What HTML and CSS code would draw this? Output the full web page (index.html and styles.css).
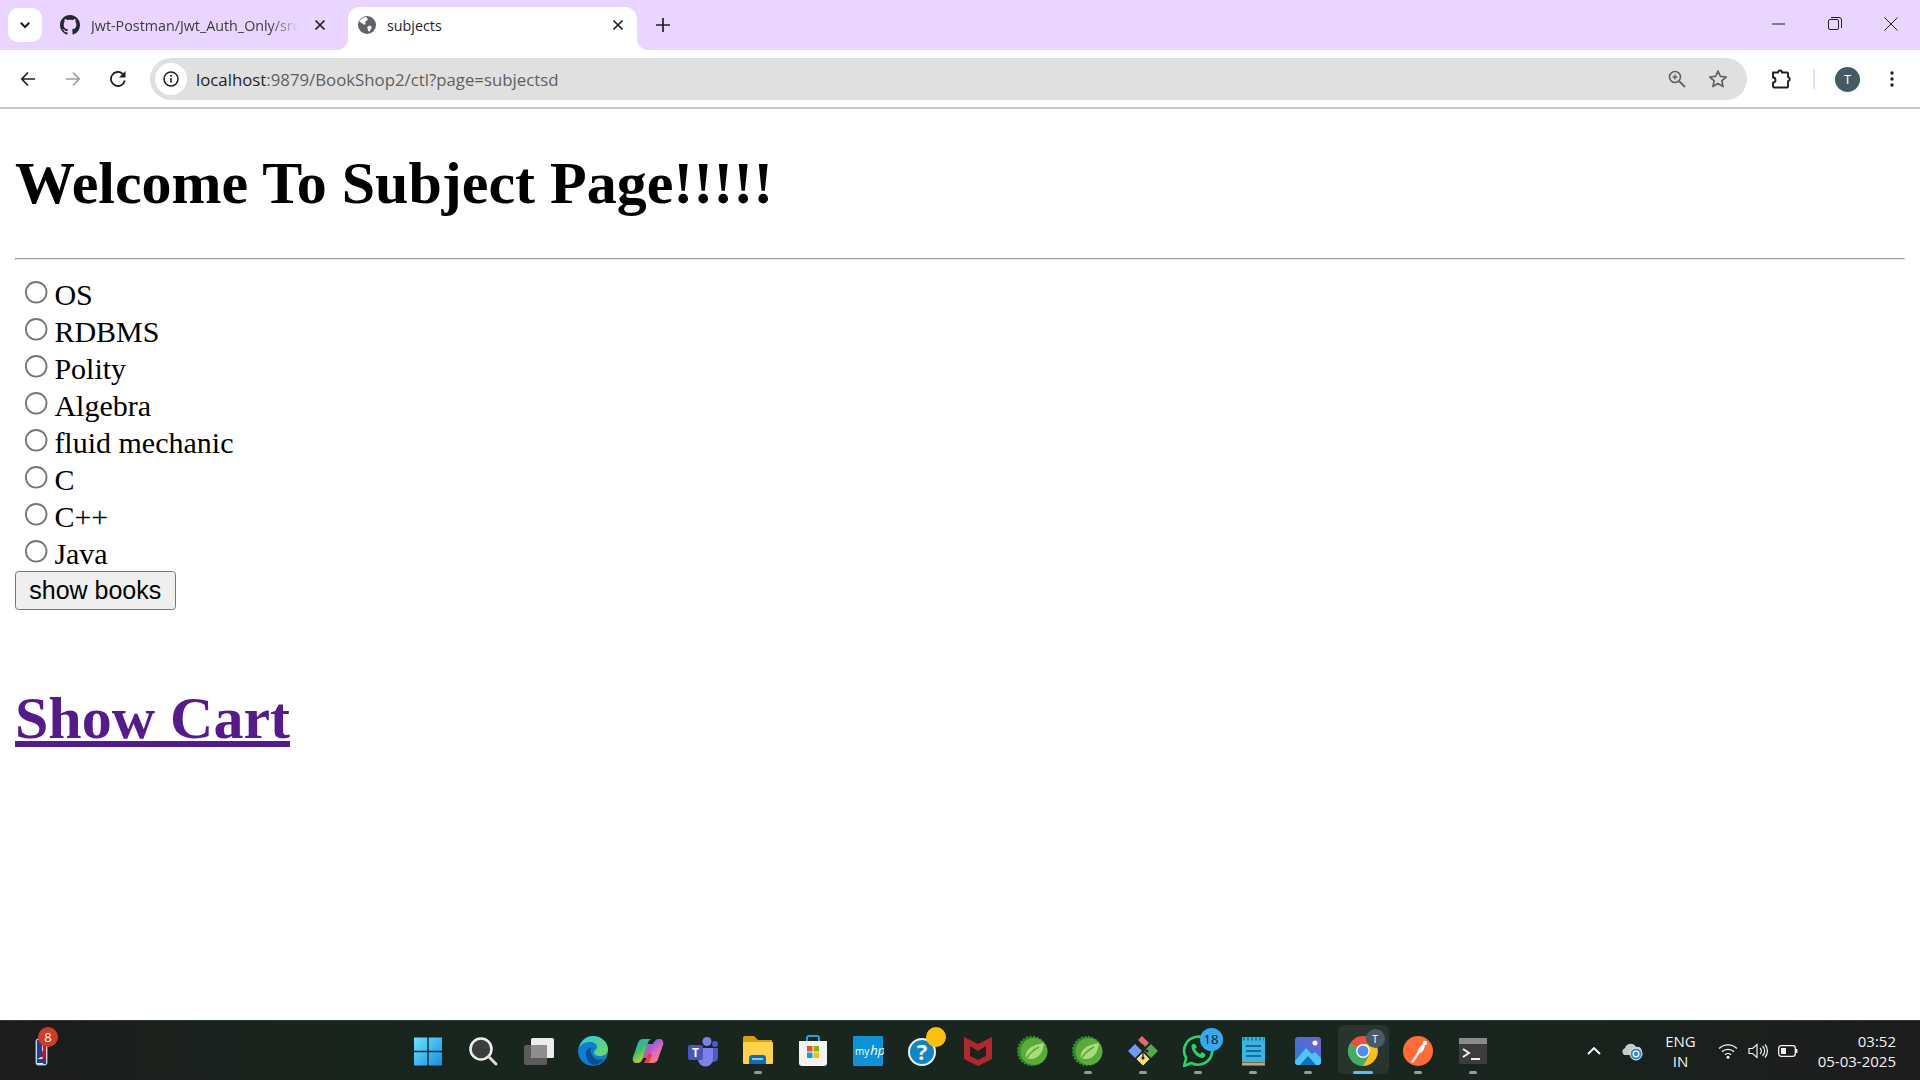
FILE: index.html
```html
<!DOCTYPE html>
<html lang="en">
<head>
  <meta charset="UTF-8" />
  <title>subjects</title>
  <link rel="stylesheet" href="styles.css">
</head>
<body>
  <div class="window">
    <div class="tabstrip">
      <button class="tab-search" type="button" aria-label="Search tabs">
        <svg viewBox="0 0 16 16" width="16" height="16"><path d="M3.800 5.800 8 10l4.200-4.200" fill="none" stroke="#1f1f1f" stroke-width="2"/></svg>
      </button>
      <div class="tab">
        <svg class="favicon" viewBox="0 0 16 16" width="20" height="20"><path fill="#24292f" d="M8 0C3.58 0 0 3.58 0 8c0 3.54 2.29 6.53 5.47 7.59.4.07.55-.17.55-.38 0-.19-.01-.82-.01-1.49-2.01.37-2.53-.49-2.69-.94-.09-.23-.48-.94-.82-1.13-.28-.15-.68-.52-.01-.53.63-.01 1.08.58 1.23.82.72 1.21 1.87.87 2.33.66.07-.52.28-.87.51-1.07-1.78-.2-3.64-.89-3.64-3.95 0-.87.31-1.59.82-2.15-.08-.2-.36-1.02.08-2.12 0 0 .67-.21 2.2.82.64-.18 1.32-.27 2-.27s1.36.09 2 .27c1.53-1.04 2.2-.82 2.2-.82.44 1.1.16 1.92.08 2.12.51.56.82 1.27.82 2.15 0 3.07-1.87 3.75-3.65 3.95.29.25.54.73.54 1.48 0 1.07-.01 1.93-.01 2.2 0 .21.15.46.55.38A8.01 8.01 0 0 0 16 8c0-4.42-3.58-8-8-8z"/></svg>
        <span class="tab-title fade">Jwt-Postman/Jwt_Auth_Only/src</span>
        <svg class="tab-close" viewBox="0 0 12 12" width="12" height="12"><path d="M1.500 1.500l9 9M10.500 1.500l-9 9" stroke="#1f1f1f" stroke-width="1.700"/></svg>
      </div>
      <div class="tab active">
        <svg class="favicon" viewBox="0 0 20 20" width="18" height="18"><circle cx="10" cy="10" r="10" fill="#5f6368"/><path fill="#fff" d="M8.500 1.200c1.500 1 2.700 1.600 2.200 3-.4 1.100-2 .9-2.500 2-.4 1 .7 1.800.1 2.800-.6 1-2.200.6-3.100-.4C3.700 7.400 2.400 6.500 1.500 7 2.300 4 5 1.700 8.500 1.200zM12 11c1.400-.3 3 .3 3.200 1.500.2 1.300-1 1.800-1.500 3-.4 1-.5 1.800-1.600 1.700-1.200-.2-1-1.700-1.400-2.900-.4-1.200-.7-3 1.300-3.300z"/></svg>
        <span class="tab-title">subjects</span>
        <svg class="tab-close" viewBox="0 0 12 12" width="12" height="12"><path d="M1.500 1.500l9 9M10.500 1.500l-9 9" stroke="#1f1f1f" stroke-width="1.700"/></svg>
      </div>
      <svg class="new-tab" viewBox="0 0 14 14" width="14" height="14"><path d="M7 0v14M0 7h14" stroke="#1f1f1f" stroke-width="1.700"/></svg>
      <div class="window-controls">
        <svg viewBox="0 0 14 14" width="14" height="14"><path d="M0 7h13" stroke="#222" stroke-width="1"/></svg>
        <svg viewBox="0 0 14 14" width="14" height="14"><rect x=".5" y="2.500" width="10" height="10" rx="1.500" fill="none" stroke="#222"/><path d="M3 .5h8a2.500 2.500 0 0 1 2.500 2.500v8" fill="none" stroke="#222"/></svg>
        <svg viewBox="0 0 14 14" width="14" height="14"><path d="M.5.5l13 13M13.500.5l-13 13" stroke="#222" stroke-width="1"/></svg>
      </div>
    </div>

    <div class="toolbar">
      <svg class="nav-btn" viewBox="0 0 16 16" width="16" height="16"><path d="M15 8H2M8 1.500 1.800 8 8 14.500" fill="none" stroke="#1f1f1f" stroke-width="1.700"/></svg>
      <svg class="nav-btn" viewBox="0 0 16 16" width="16" height="16"><path d="M1 8h13M8 1.500 14.200 8 8 14.500" fill="none" stroke="#9aa0a6" stroke-width="1.700"/></svg>
      <svg class="nav-btn" viewBox="0 0 16 16" width="16" height="16"><path d="M14.800 9.500A7 7 0 1 1 12.800 2.900" fill="none" stroke="#1f1f1f" stroke-width="1.800"/><path d="M15.500 0v6.500H9z" fill="#1f1f1f"/></svg>
      <div class="omnibox">
        <span class="site-info">
          <svg viewBox="0 0 16 16" width="16" height="16"><circle cx="8" cy="8" r="7" fill="none" stroke="#1f1f1f" stroke-width="1.500"/><path d="M8 7v4.500M8 4v1.700" stroke="#1f1f1f" stroke-width="1.600"/></svg>
        </span>
        <span class="url"><span class="host">localhost</span>:9879/BookShop2/ctl?page=subjectsd</span>
        <svg class="omni-icon" viewBox="0 0 18 18" width="18" height="18"><circle cx="7" cy="7" r="5.500" fill="none" stroke="#5f6368" stroke-width="1.600"/><path d="M11 11l6 6" stroke="#5f6368" stroke-width="1.800"/><path d="M4.500 7h5M7 4.500v5" stroke="#5f6368" stroke-width="1.500"/></svg>
        <svg class="omni-icon" viewBox="0 0 20 20" width="20" height="20"><path d="M10 2l2.400 5.400 5.800.6-4.400 3.900 1.300 5.700-5.100-3-5.100 3 1.300-5.700L1.800 8l5.800-.6z" fill="none" stroke="#5f6368" stroke-width="1.700" stroke-linejoin="round"/></svg>
      </div>
      <svg class="extensions" viewBox="0 0 20 20" width="20" height="20"><path d="M2 3.500h5a2 2 0 0 1 4 0h5a1 1 0 0 1 1 1V8a2.200 2.200 0 0 1 0 4.300v5.200a1 1 0 0 1-1 1H3l-1-1v-4a2.500 2.500 0 0 0 0-5V4z" fill="none" stroke="#1f1f1f" stroke-width="1.900" stroke-linejoin="round"/></svg>
      <span class="toolbar-divider"></span>
      <span class="avatar">T</span>
      <svg class="menu-dots" viewBox="0 0 4 16" width="4" height="16"><circle cx="2" cy="2" r="1.700" fill="#1f1f1f"/><circle cx="2" cy="8" r="1.700" fill="#1f1f1f"/><circle cx="2" cy="14" r="1.700" fill="#1f1f1f"/></svg>
    </div>

    <main class="page">
      <h1>Welcome To Subject Page!!!!!</h1>
      <hr>
      <form class="subject-form">
        <input type="radio" name="subject" id="s1"><label for="s1">OS</label><br>
        <input type="radio" name="subject" id="s2"><label for="s2">RDBMS</label><br>
        <input type="radio" name="subject" id="s3"><label for="s3">Polity</label><br>
        <input type="radio" name="subject" id="s4"><label for="s4">Algebra</label><br>
        <input type="radio" name="subject" id="s5"><label for="s5">fluid mechanic</label><br>
        <input type="radio" name="subject" id="s6"><label for="s6">C</label><br>
        <input type="radio" name="subject" id="s7"><label for="s7">C++</label><br>
        <input type="radio" name="subject" id="s8"><label for="s8">Java</label><br>
        <button type="button" class="show-books">show books</button>
      </form>
      <br>
      <h1><a class="cart-link" href="#cart">Show Cart</a></h1>
    </main>

    <footer class="taskbar">
      <div class="task-left">
        <div class="app">
          <svg viewBox="0 0 32 32" width="32" height="32"><rect x="11" y="4" width="11" height="26" rx="2" fill="#f2f2f2" stroke="#9db4d8"/><path d="M12 5h5v10l2 6-7 3z" fill="#1d428a"/><path d="M17 5h4v24h-3l-1-10 1-4z" fill="#c8102e"/><rect x="12" y="24" width="9" height="4" fill="#1d428a"/></svg>
          <span class="badge badge-red">8</span>
        </div>
      </div>
      <div class="task-apps">
        <div class="app">
          <svg viewBox="0 0 32 32" width="32" height="32"><defs><linearGradient id="win" x1="0" y1="0" x2="1" y2="1"><stop offset="0" stop-color="#6fe3fb"/><stop offset="1" stop-color="#0f8fe8"/></linearGradient></defs><path fill="url(#win)" d="M2 2.500h13.300v13.300H2zM16.700 2.500H30v13.300H16.700zM2 17.200h13.300v13.300H2zM16.700 17.200H30v13.300H16.700z"/></svg>
        </div>
        <div class="app">
          <svg viewBox="0 0 32 32" width="32" height="32"><circle cx="14" cy="14" r="10.500" fill="#3a3f3c" stroke="#ececec" stroke-width="2.600"/><path d="M22 22l7 7" stroke="#d8d8d8" stroke-width="3" stroke-linecap="round"/></svg>
        </div>
        <div class="app">
          <svg viewBox="0 0 32 32" width="32" height="32"><rect x="2" y="10" width="23" height="20" rx="2" fill="#5b5b5b"/><rect x="9" y="3" width="23" height="20" rx="1.500" fill="#ececec"/><rect x="9" y="10" width="16" height="13" fill="#8e8e8e"/></svg>
        </div>
        <div class="app">
          <svg viewBox="0 0 32 32" width="32" height="32"><defs><linearGradient id="edge" x1="0" y1="0" x2="1" y2="1"><stop offset="0" stop-color="#2fc7d8"/><stop offset="1" stop-color="#6fdc5a"/></linearGradient></defs><circle cx="16" cy="16" r="15" fill="#0c7fd0"/><path d="M2 13C4 5 10 1 16 1c8 0 15 6 15 13 0 5-4 7-8 7-3 0-6-1-6-3 0-3 3-3 3-6s-3-5-7-5C8 7 4 9 2 13z" fill="url(#edge)"/><path d="M9 19c0-4 3-7 7-6-3 1-3 4-1 7 2 4 7 6 12 4-3 4-7 6-11 6-4-2-7-6-7-11z" fill="#0a4f95"/></svg>
        </div>
        <div class="app">
          <svg viewBox="0 0 32 32" width="32" height="32"><defs><linearGradient id="cop1" x1="0" y1="0" x2=".6" y2="1"><stop offset="0" stop-color="#2f9cf5"/><stop offset=".5" stop-color="#35c26b"/><stop offset="1" stop-color="#f6c433"/></linearGradient><linearGradient id="cop2" x1=".4" y1="0" x2="1" y2="1"><stop offset="0" stop-color="#6a5cf0"/><stop offset=".5" stop-color="#e86ab8"/><stop offset="1" stop-color="#f7903c"/></linearGradient></defs><path d="M15 9h7l-5 14h-6z" fill="#b05ad0"/><path d="M11 4h8c-2 1-3 3-4 6l-4 13c-1 3-3 5-6 5H4c-2.500 0-4-3-3-6L6 8c.7-2.500 2.500-4 5-4z" fill="url(#cop1)"/><path d="M21 28h-8c2-1 3-3 4-6l4-13c1-3 3-5 6-5h1c2.500 0 4 3 3 6l-5 14c-.7 2.500-2.500 4-5 4z" fill="url(#cop2)"/><path d="M12 28l5-10 3 2-3 8z" fill="#e8403a"/></svg>
        </div>
        <div class="app">
          <svg viewBox="0 0 32 32" width="32" height="32"><circle cx="20" cy="6.500" r="4.500" fill="#7b83eb"/><circle cx="28" cy="9" r="3" fill="#5059c9"/><path d="M24 13h7v9c0 3-2 5-5 5l-2-1z" fill="#5059c9"/><path d="M11 13h15v11a7.500 7.500 0 0 1-15 0z" fill="#7b83eb"/><rect x="1" y="10" width="15" height="15" rx="2" fill="#4b53bc"/><text class="teams-t" x="8.500" y="22">T</text></svg>
        </div>
        <div class="app running">
          <svg viewBox="0 0 32 32" width="32" height="32"><path d="M1 3a2 2 0 0 1 2-2h9l4 4h14v6H1z" fill="#d99f0b"/><path d="M1 7h29a1 1 0 0 1 1 1v20a1 1 0 0 1-1 1H2a1 1 0 0 1-1-1z" fill="#fdd34e"/><path d="M7 29v-6a3 3 0 0 1 3-3h11a3 3 0 0 1 3 3v6z" fill="#0c6cc0"/><rect x="10" y="23" width="11" height="2" fill="#7ccbf5"/></svg>
        </div>
        <div class="app">
          <svg viewBox="0 0 32 32" width="32" height="32"><path d="M10 6V3a2 2 0 0 1 2-2h8a2 2 0 0 1 2 2v3" fill="none" stroke="#2c9fe0" stroke-width="2"/><path d="M2 6h28v22a3 3 0 0 1-3 3H5a3 3 0 0 1-3-3z" fill="#f4f4f4"/><rect x="10" y="11" width="5.500" height="5.500" fill="#f25022"/><rect x="16.500" y="11" width="5.500" height="5.500" fill="#7fba00"/><rect x="10" y="17.500" width="5.500" height="5.500" fill="#00a4ef"/><rect x="16.500" y="17.500" width="5.500" height="5.500" fill="#ffb900"/></svg>
        </div>
        <div class="app">
          <svg viewBox="0 0 32 32" width="32" height="32"><rect width="30" height="30" x="1" y="1" rx="1" fill="#0a93d6"/><text class="myhp" x="3" y="20"><tspan>my</tspan><tspan class="myhp-hp" dx="1">hp</tspan></text></svg>
        </div>
        <div class="app">
          <svg viewBox="0 0 32 32" width="32" height="32"><circle cx="15" cy="17" r="13" fill="#0f86c6" stroke="#e8f4fb" stroke-width="2"/><text class="help-mark" x="15" y="25">?</text></svg>
          <span class="badge badge-dot"></span>
        </div>
        <div class="app">
          <svg viewBox="0 0 32 32" width="32" height="32"><path d="M2 2l14 7 14-7v22l-14 7-14-7z" fill="#b3282d"/><path d="M8 11l8 5 8-5v10l-8 4-8-4z" fill="#1a251e"/></svg>
        </div>
        <div class="app">
          <svg viewBox="0 0 32 32" width="32" height="32"><circle cx="15" cy="16" r="14" fill="#2f8a2c" stroke="#2f8a2c" stroke-width="2.500" stroke-dasharray="2 1.500"/><circle cx="17" cy="16.500" r="13.500" fill="#5cab3a"/><path d="M9 24c-2-8 4-14 18-16-1 10-6 16-13 16-2 0-4-.3-5 0z" fill="#a9dc7c"/><path d="M9 24c3-5 7-9 13-12" stroke="#5cab3a" stroke-width="1.500" fill="none"/></svg>
        </div>
        <div class="app running">
          <svg viewBox="0 0 32 32" width="32" height="32"><circle cx="15" cy="16" r="14" fill="#2f8a2c" stroke="#2f8a2c" stroke-width="2.500" stroke-dasharray="2 1.500"/><circle cx="17" cy="16.500" r="13.500" fill="#5cab3a"/><path d="M9 24c-2-8 4-14 18-16-1 10-6 16-13 16-2 0-4-.3-5 0z" fill="#a9dc7c"/><path d="M9 24c3-5 7-9 13-12" stroke="#5cab3a" stroke-width="1.500" fill="none"/></svg>
        </div>
        <div class="app running">
          <svg viewBox="0 0 32 32" width="32" height="32"><path d="M11 5l4-4 7 7-4 4z" fill="#e8696b"/><path d="M1 16l7-7 7 7-7 7z" fill="#6e9cf5"/><path d="M17 16l7-7 7 7-7 7z" fill="#55a84a"/><path d="M9 24l7-7 7 7-7 7z" fill="#f5dd76" stroke="#1a251e" stroke-width=".8"/><circle cx="16" cy="11" r="1.500" fill="#222"/><circle cx="20" cy="16" r="1.500" fill="#222"/><circle cx="16" cy="23" r="1.500" fill="#222"/><path d="M16 11v12M16 14l4 2" stroke="#222" stroke-width="1.200" fill="none"/></svg>
        </div>
        <div class="app running">
          <svg viewBox="0 0 32 32" width="32" height="32"><path d="M2 31l2.200-8A14 14 0 1 1 9.500 28z" fill="#1a251e" stroke="#25d366" stroke-width="2.600" stroke-linejoin="round"/><path d="M11 9c-2 1-2 4 0 7 2 4 6 7 9 7 2 0 4-2 3-4l-3-2-2 2c-2-1-4-3-5-5l2-2-2-3z" fill="#25d366"/></svg>
          <span class="badge badge-blue">18</span>
        </div>
        <div class="app running">
          <svg viewBox="0 0 32 32" width="32" height="32"><rect x="5" y="2" width="23" height="29" rx="1" fill="#3db4e0"/><rect x="5" y="27" width="23" height="4" fill="#8a6a3c"/><path d="M5 29h23" stroke="#e6e6e6"/><path d="M6 4h21" stroke="#0e7fb2" stroke-width="3" stroke-dasharray="2 2"/><path d="M9 11h15M9 16h15M9 21h15" stroke="#0c6fa0" stroke-width="2.200"/></svg>
        </div>
        <div class="app running">
          <svg viewBox="0 0 32 32" width="32" height="32"><defs><linearGradient id="pho" x1="1" y1="0" x2="0" y2="1"><stop offset="0" stop-color="#7a5fc8"/><stop offset="1" stop-color="#1d7fe0"/></linearGradient></defs><rect x="3" y="2" width="26" height="28" rx="3" fill="url(#pho)"/><circle cx="23" cy="8" r="2.500" fill="#fff"/><path d="M3 26l11-13 6 6 3-2 6 6v4a3 3 0 0 1-3 3H6a3 3 0 0 1-3-3z" fill="#4cc6f2"/><path d="M8 30l8-9 8 9z" fill="#0f6fc0"/></svg>
        </div>
        <div class="app active-app">
          <svg viewBox="0 0 32 32" width="32" height="32"><circle cx="16" cy="16" r="15" fill="#ea4335"/><path d="M16 16 3 8.500A15 15 0 0 0 16 31l7.500-13z" fill="#34a853"/><path d="M16 9h13a15 15 0 0 1-13 22l7.500-13z" fill="#fbbc05"/><circle cx="16" cy="16" r="7" fill="#fff"/><circle cx="16" cy="16" r="5.500" fill="#4285f4"/></svg>
          <span class="badge badge-profile">T</span>
        </div>
        <div class="app running">
          <svg viewBox="0 0 32 32" width="32" height="32"><circle cx="16" cy="16" r="15" fill="#ff6c37"/><path d="M9 27l6-9 2-5 4-4 2 2-2 5-4 3-6 9z" fill="#fff"/><circle cx="23" cy="8" r="2.200" fill="#fff"/></svg>
        </div>
        <div class="app running">
          <svg viewBox="0 0 32 32" width="32" height="32"><rect x="2" y="3" width="28" height="26" rx="1.500" fill="#3c3c3c"/><rect x="2" y="3" width="28" height="6" fill="#8a8a8a"/><path d="M6 14l6 4-6 4" fill="none" stroke="#f0f0f0" stroke-width="2"/><path d="M14 24h9" stroke="#f0f0f0" stroke-width="2"/></svg>
        </div>
      </div>
      <div class="tray">
        <svg class="tray-chevron" viewBox="0 0 14 8" width="14" height="8"><path d="M1 7l6-6 6 6" fill="none" stroke="#fff" stroke-width="1.800"/></svg>
        <svg class="tray-cloud" viewBox="0 0 22 20" width="22" height="20"><path d="M3 14a4 4 0 0 1 1-7 6 6 0 0 1 11-1 4 4 0 0 1 3 8z" fill="#c9c9c9"/><circle cx="15" cy="13" r="6" fill="#2b88d8" stroke="#eee"/><circle cx="15" cy="13" r="2.800" fill="none" stroke="#fff" stroke-width="1.300"/></svg>
        <div class="lang"><span>ENG</span><span>IN</span></div>
        <svg class="tray-icon" viewBox="0 0 20 16" width="20" height="16"><path d="M1 5.500a13 13 0 0 1 18 0M4 8.800a8.500 8.500 0 0 1 12 0M7 11.800a4 4 0 0 1 6 0" fill="none" stroke="#f2f2f2" stroke-width="1.300"/><circle cx="10" cy="14.300" r="1.500" fill="#f2f2f2"/></svg>
        <svg class="tray-icon" viewBox="0 0 20 16" width="20" height="16"><path d="M1 5.500h3.500L9 1.500v13l-4.500-4H1z" fill="none" stroke="#f2f2f2" stroke-width="1.200"/><path d="M12 5a4 4 0 0 1 0 6M14.500 3a7 7 0 0 1 0 10M17 1.500a10 10 0 0 1 0 13" fill="none" stroke="#f2f2f2" stroke-width="1.200"/></svg>
        <svg class="tray-icon" viewBox="0 0 20 14" width="20" height="14"><rect x=".7" y="1.700" width="16.600" height="10.600" rx="2.500" fill="none" stroke="#f2f2f2" stroke-width="1.300"/><rect x="3" y="4" width="5" height="6" fill="#f2f2f2"/><path d="M18.500 5v4" stroke="#f2f2f2" stroke-width="1.800"/></svg>
        <div class="clock"><span>03:52</span><span>05-03-2025</span></div>
      </div>
    </footer>
  </div>
</body>
</html>
```

FILE: styles.css
```css
* {
  box-sizing: border-box;
}

html, body {
  margin: 0;
  height: 100%;
}

.window {
  display: flex;
  flex-direction: column;
  height: 1080px;
  overflow: hidden;
  background: #ffffff;
  font-family: "Open Sans", "Noto Sans", sans-serif;
}

/* tab strip */
.tabstrip {
  display: flex;
  align-items: flex-end;
  height: 50px;
  flex-shrink: 0;
  padding-left: 8px;
  background: #e9d5ff;
}

.tab-search {
  display: flex;
  align-items: center;
  justify-content: center;
  align-self: flex-start;
  width: 34px;
  height: 34px;
  margin-top: 8px;
  padding: 0;
  border: none;
  border-radius: 10px;
  background: #ffffff;
}

.tab {
  display: flex;
  align-items: center;
  width: 306px;
  height: 43px;
  padding: 0 22px 7px 18px;
  color: #3c3c3c;
}

.tab.active {
  position: relative;
  width: 289px;
  padding-left: 10px;
  padding-right: 13px;
  border-radius: 12px 12px 0 0;
  background: #ffffff;
  color: #1f1f1f;
}

.tab.active::before,
.tab.active::after {
  content: "";
  position: absolute;
  bottom: 0;
  width: 12px;
  height: 12px;
}

.tab.active::before {
  left: -12px;
  background: radial-gradient(circle at 0 0, transparent 12px, #ffffff 12.5px);
}

.tab.active::after {
  right: -12px;
  background: radial-gradient(circle at 100% 0, transparent 12px, #ffffff 12.5px);
}

.favicon {
  flex-shrink: 0;
  margin-right: 11px;
}

.tab-title {
  flex: 1;
  overflow: hidden;
  white-space: nowrap;
  font-size: 14.3px;
}

.tab-title.fade {
  margin-right: 15px;
  -webkit-mask-image: linear-gradient(to right, #000 86%, transparent 100%);
  mask-image: linear-gradient(to right, #000 86%, transparent 100%);
}

.tab-close {
  flex-shrink: 0;
}

.new-tab {
  align-self: center;
  margin-left: 19px;
}

.window-controls {
  display: flex;
  gap: 42px;
  align-self: flex-start;
  margin-left: auto;
  padding: 17px 22px 0 0;
}

/* toolbar */
.toolbar {
  display: flex;
  align-items: center;
  height: 59px;
  flex-shrink: 0;
  padding: 1px 26px 0 20px;
  border-radius: 12px 12px 0 0;
  border-bottom: 2px solid #c7c7c7;
  background: #ffffff;
}

.nav-btn {
  flex-shrink: 0;
  margin-right: 29px;
}

.omnibox {
  display: flex;
  align-items: center;
  width: 1597px;
  height: 42px;
  margin-left: -5px;
  padding: 0 19px 0 5px;
  border-radius: 21px;
  background: #e0e0e0;
  color: #5f5f5f;
}

.site-info {
  display: flex;
  align-items: center;
  justify-content: center;
  width: 32px;
  height: 32px;
  margin-right: 9px;
  border-radius: 50%;
  background: #ffffff;
}

.url {
  flex: 1;
  font-size: 16.8px;
}

.host {
  color: #1f1f1f;
}

.omni-icon {
  margin-left: 22px;
}

.extensions {
  margin-left: 24px;
}

.toolbar-divider {
  width: 2px;
  height: 20px;
  margin-left: 22px;
  background: #e9d5ff;
}

.avatar {
  display: flex;
  align-items: center;
  justify-content: center;
  width: 25px;
  height: 25px;
  margin-left: 20px;
  border-radius: 50%;
  background: #455a64;
  color: #ffffff;
  font-size: 13px;
}

.menu-dots {
  margin-left: 30px;
}

/* the page inside the browser is zoomed, default element styles on purpose */
.page {
  flex: 1;
  overflow: hidden;
  zoom: 1.875;
  padding: 0 8px;
  font-family: "Liberation Serif", serif;
  color: #000000;
}

.page h1 {
  font-size: 32px;
}

.show-books {
  font-family: "Liberation Sans", sans-serif;
}

.cart-link {
  color: #551a8b;
}

/* taskbar */
.taskbar {
  display: flex;
  align-items: center;
  height: 60px;
  flex-shrink: 0;
  border-top: 1px solid #2f3a34;
  background: linear-gradient(to right, #1c1c1c, #18261e 25%, #18261e 72%, #1c1c1c);
  color: #ffffff;
}

.task-left {
  display: flex;
  width: 400.5px;
  padding-left: 13px;
}

.task-apps {
  display: flex;
}

.app {
  position: relative;
  display: flex;
  align-items: center;
  justify-content: center;
  width: 55px;
  height: 52px;
}

.app.running::after,
.app.active-app::after {
  content: "";
  position: absolute;
  left: 50%;
  bottom: 3px;
  width: 8px;
  height: 3px;
  margin-left: -4px;
  border-radius: 2px;
  background: #9a9a9a;
}

.app.active-app::before {
  content: "";
  position: absolute;
  top: 0;
  right: 2px;
  bottom: 3px;
  left: 2px;
  border-radius: 6px;
  background: rgba(255, 255, 255, 0.07);
}

.app.active-app::after {
  width: 20px;
  margin-left: -10px;
  background: #4cc2ff;
}

.badge {
  position: absolute;
  display: flex;
  align-items: center;
  justify-content: center;
  border-radius: 50%;
  font-size: 13px;
}

.badge-red {
  top: 2px;
  left: 25px;
  width: 20px;
  height: 20px;
  background: #d13b2a;
}

.badge-dot {
  top: 2px;
  left: 30px;
  width: 20px;
  height: 20px;
  background: #ffc107;
}

.badge-blue {
  top: 3px;
  left: 29px;
  width: 23px;
  height: 23px;
  background: #35a9f2;
  color: #111111;
}

.badge-profile {
  top: 4px;
  left: 30px;
  width: 19px;
  height: 19px;
  background: #4a5a68;
  font-size: 11px;
}

.teams-t {
  fill: #ffffff;
  font: bold 12px "Open Sans", sans-serif;
  text-anchor: middle;
}

.myhp {
  fill: #ffffff;
  font: 10px "Open Sans", sans-serif;
}

.myhp-hp {
  font-size: 13px;
  font-style: italic;
}

.help-mark {
  fill: #ffffff;
  font: bold 22px "Open Sans", sans-serif;
  text-anchor: middle;
}

.tray {
  display: flex;
  align-items: center;
  margin-left: auto;
  padding-right: 24px;
  font-size: 15px;
  color: #f2f2f2;
}

.tray-chevron {
  margin-right: 20px;
}

.tray-cloud {
  margin-right: 22px;
}

.lang {
  display: flex;
  flex-direction: column;
  align-items: center;
  margin-right: 22px;
  line-height: 20px;
}

.tray-icon {
  margin-right: 10px;
}

.clock {
  display: flex;
  flex-direction: column;
  align-items: flex-end;
  margin-left: 10px;
  line-height: 20px;
}
```
